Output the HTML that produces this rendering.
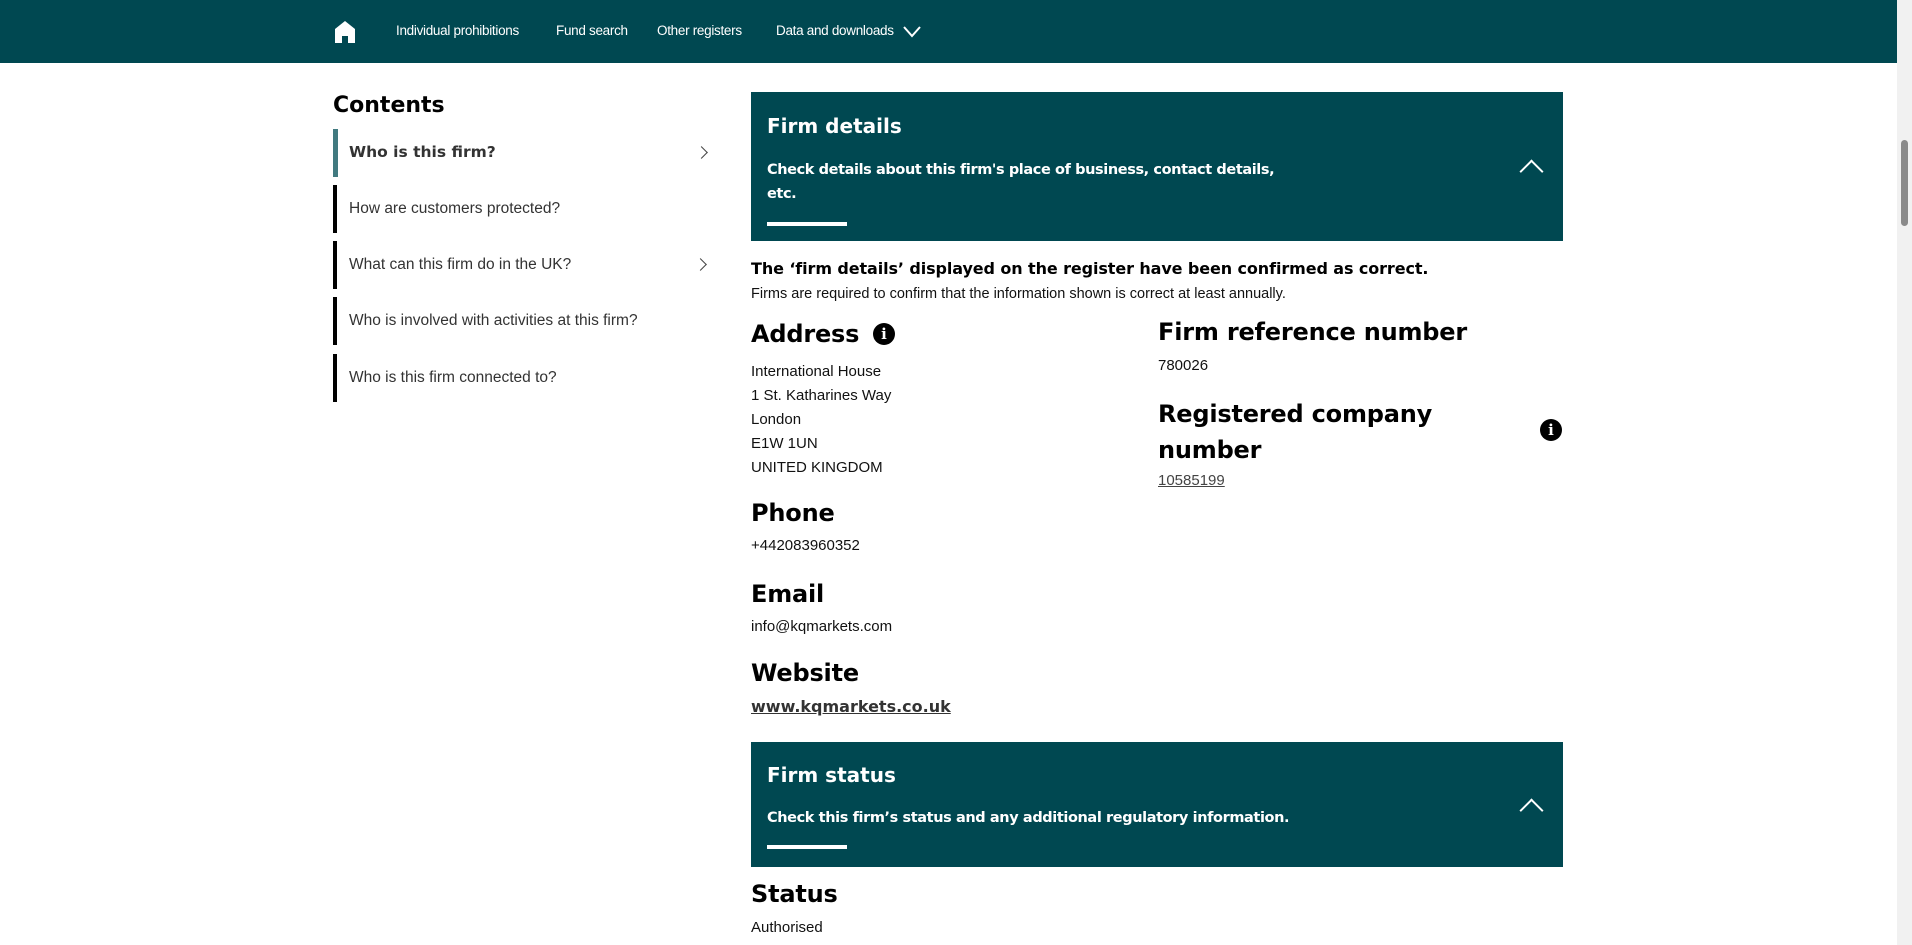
<!DOCTYPE html>
<html><head><meta charset="utf-8"><style>
*{margin:0;padding:0;box-sizing:border-box}
body{width:1912px;height:945px;overflow:hidden;background:#fff;position:relative;font-family:"Liberation Sans",sans-serif;color:#111}
.a{position:absolute;white-space:nowrap}
.nav{position:absolute;left:0;top:0;width:1897px;height:63px;background:#004851}
.nl{position:absolute;top:23px;color:#fff;font-size:13.5px;letter-spacing:-0.3px}
.sb{position:absolute;left:1897px;top:0;width:15px;height:945px;background:#f1f1f1}
.th{position:absolute;left:4px;top:140px;width:7px;height:86px;background:#8a8a8a;border-radius:4px}
.ci{position:absolute;left:333px;width:380px;height:48px;border-left:4px solid #000;color:#333;font-size:15.5px}
.ci span{position:absolute;left:12px;top:15px}
.chev{position:absolute;left:359px;top:19px;width:9px;height:9px;border-top:1.5px solid #444;border-right:1.5px solid #444;transform:rotate(45deg)}
.panel{position:absolute;left:751px;width:812px;background:#004851;color:#fff}
.pt{position:absolute;left:16px;font-family:"DejaVu Sans",sans-serif;font-weight:bold;font-size:20px}
.ps{position:absolute;left:16px;font-family:"DejaVu Sans",sans-serif;font-size:14.5px;font-weight:bold;letter-spacing:-0.4px;line-height:24px}
.bar{position:absolute;left:16px;width:80px;height:4px;background:#fff}
.up{position:absolute;left:772px;width:17px;height:17px;border-top:2.5px solid #fff;border-left:2.5px solid #fff;transform:rotate(45deg)}
.h{position:absolute;font-family:"DejaVu Sans",sans-serif;font-weight:bold;font-size:24px;color:#000;white-space:nowrap;letter-spacing:-0.2px}
.t{position:absolute;font-size:15px;color:#111;white-space:nowrap}
.info{position:absolute;width:22px;height:22px;border-radius:50%;background:#000;color:#fff;font-family:"DejaVu Serif",serif;font-weight:bold;font-size:15px;text-align:center;line-height:22px}
</style></head><body>
<div class="nav">
<svg style="position:absolute;left:335px;top:21px" width="20" height="22" viewBox="0 0 20 22"><path d="M10 0 L20 8 V22 H13 V15 H7 V22 H0 V8 Z" fill="#fff"/></svg>
<div class="nl" style="left:396px">Individual prohibitions</div>
<div class="nl" style="left:556px">Fund search</div>
<div class="nl" style="left:657px">Other registers</div>
<div class="nl" style="left:776px">Data and downloads</div>
<svg style="position:absolute;left:903px;top:26px" width="18" height="12" viewBox="0 0 18 12"><path d="M1 1 L9 10 L17 1" stroke="#fff" stroke-width="2" fill="none"/></svg>
</div>
<div class="sb"><div class="th"></div></div>

<div class="a" style="left:333px;top:93px;font-family:'DejaVu Sans',sans-serif;font-weight:bold;font-size:22px;color:#000">Contents</div>
<div class="ci" style="top:129px;border-left:5px solid #417a80"><span style="font-family:'DejaVu Sans',sans-serif;font-weight:bold;font-size:15.5px;top:14px;left:11px">Who is this firm?</span><div class="chev"></div></div>
<div class="ci" style="top:185px"><span>How are customers protected?</span></div>
<div class="ci" style="top:241px"><span>What can this firm do in the UK?</span><div class="chev"></div></div>
<div class="ci" style="top:297px"><span>Who is involved with activities at this firm?</span></div>
<div class="ci" style="top:354px"><span>Who is this firm connected to?</span></div>

<div class="panel" style="top:92px;height:149px">
<div class="pt" style="top:22px">Firm details</div>
<div class="ps" style="top:66px;width:540px;white-space:normal">Check details about this firm's place of business, contact details, etc.</div>
<div class="bar" style="top:130px"></div>
<div class="up" style="top:71px"></div>
</div>

<div class="a" style="left:751px;top:259px;font-family:'DejaVu Sans',sans-serif;font-weight:bold;font-size:16px;color:#000;letter-spacing:-0.1px">The ‘firm details’ displayed on the register have been confirmed as correct.</div>
<div class="t" style="left:751px;top:286px;font-size:14.5px">Firms are required to confirm that the information shown is correct at least annually.</div>

<div class="h" style="left:751px;top:320px">Address</div>
<div class="info" style="left:873px;top:323px">i</div>
<div class="t" style="left:751px;top:360px;line-height:24px">International House<br>1 St. Katharines Way<br>London<br>E1W 1UN<br>UNITED KINGDOM</div>
<div class="h" style="left:751px;top:499px">Phone</div>
<div class="t" style="left:751px;top:537px">+442083960352</div>
<div class="h" style="left:751px;top:580px">Email</div>
<div class="t" style="left:751px;top:618px">info@kqmarkets.com</div>
<div class="h" style="left:751px;top:659px">Website</div>
<div class="a" style="left:751px;top:697px;font-family:'DejaVu Sans',sans-serif;font-weight:bold;font-size:16px;color:#333;text-decoration:underline">www.kqmarkets.co.uk</div>

<div class="h" style="left:1158px;top:318px">Firm reference number</div>
<div class="t" style="left:1158px;top:357px">780026</div>
<div class="h" style="left:1158px;top:396px;line-height:36px;white-space:normal;width:330px">Registered company number</div>
<div class="info" style="left:1540px;top:419px">i</div>
<div class="t" style="left:1158px;top:472px;color:#444;text-decoration:underline">10585199</div>

<div class="panel" style="top:742px;height:125px">
<div class="pt" style="top:21px">Firm status</div>
<div class="ps" style="top:64px">Check this firm’s status and any additional regulatory information.</div>
<div class="bar" style="top:103px"></div>
<div class="up" style="top:60px"></div>
</div>
<div class="h" style="left:751px;top:880px">Status</div>
<div class="t" style="left:751px;top:919px">Authorised</div>
</body></html>
